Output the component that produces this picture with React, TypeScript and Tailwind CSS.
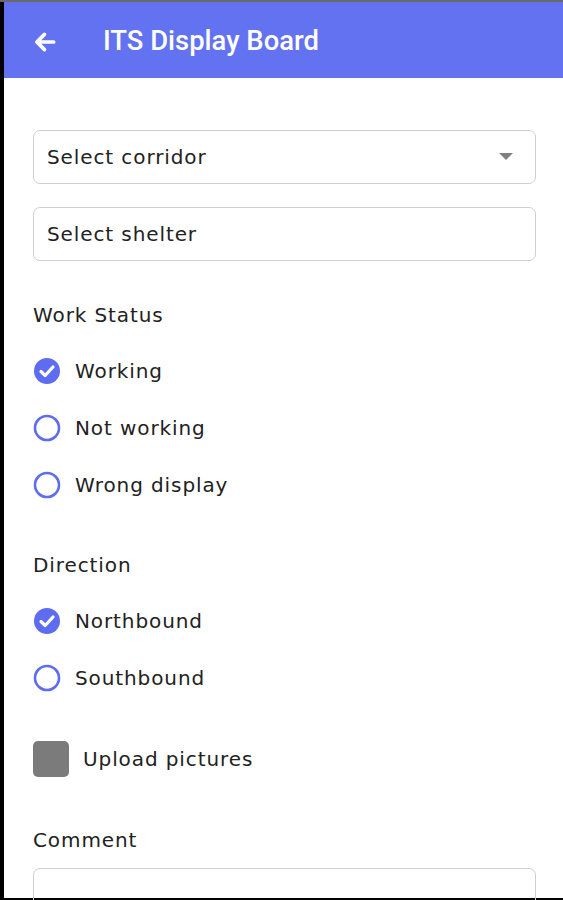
import React from "react";

const font = { fontFamily: '"DejaVu Sans", "Noto Sans", sans-serif' };

function Radio({ checked, label }: { checked: boolean; label: string }) {
  return (
    <div className="flex items-center h-[57px]">
      {checked ? (
        <svg width="28" height="28" viewBox="0 0 28 28" className="shrink-0">
          <circle cx="14" cy="14" r="13" fill="#5d6cf0" />
          <path d="M8 14.5 L12.2 18.5 L20 10" stroke="#fff" strokeWidth="3.2" fill="none" strokeLinecap="round" strokeLinejoin="round" />
        </svg>
      ) : (
        <svg width="28" height="28" viewBox="0 0 28 28" className="shrink-0">
          <circle cx="14" cy="14" r="12" fill="none" stroke="#5d6cf0" strokeWidth="2.6" />
        </svg>
      )}
      <span className="ml-[14px] text-[20px] text-[#222] tracking-[0.9px]">{label}</span>
    </div>
  );
}

export default function App() {
  return (
    <div className="w-[563px] h-[900px] overflow-hidden bg-black pl-[4px] pb-[2px]" style={font}>
      <div className="h-[2px] bg-[#6a6a6a] -ml-[4px]" />
      <div className="h-[896px] bg-white flex flex-col">
        <div className="h-[76px] bg-[#6372f1] flex items-center pl-[28px] shrink-0">
          <svg width="26" height="26" viewBox="0 0 24 24" className="shrink-0 mt-[4px]">
            <path d="M20 12 H5 M11.5 5 L4.5 12 L11.5 19" stroke="#fff" strokeWidth="3.4" fill="none" strokeLinecap="round" strokeLinejoin="round" />
          </svg>
          <span className="ml-[45px] mt-[4px] text-white text-[27.4px] font-medium" style={{ fontFamily: 'Roboto, sans-serif' }}>
            ITS Display Board
          </span>
        </div>
        <div className="pl-[29px] pr-[27px] pt-[52px] flex flex-col">
          <div className="h-[54px] border border-[#cfcfcf] rounded-[7px] flex items-center justify-between pl-[13px] pr-[22px]">
            <span className="text-[20px] text-[#222] tracking-[0.9px]">Select corridor</span>
            <svg width="14" height="8" viewBox="0 0 14 8">
              <path d="M0 0 H14 L7 7 Z" fill="#808080" />
            </svg>
          </div>
          <div className="mt-[23px] h-[54px] border border-[#cfcfcf] rounded-[7px] flex items-center pl-[13px]">
            <span className="text-[20px] text-[#222] tracking-[0.9px]">Select shelter</span>
          </div>
          <div className="mt-[41px] text-[20px] text-[#222] leading-[26px] tracking-[0.9px]">Work Status</div>
          <div className="mt-[14px] flex flex-col">
            <Radio checked label="Working" />
            <Radio checked={false} label="Not working" />
            <Radio checked={false} label="Wrong display" />
          </div>
          <div className="mt-[39px] text-[20px] text-[#222] leading-[26px] tracking-[0.9px]">Direction</div>
          <div className="mt-[14px] flex flex-col">
            <Radio checked label="Northbound" />
            <Radio checked={false} label="Southbound" />
          </div>
          <div className="mt-[35px] flex items-center">
            <div className="w-[36px] h-[36px] rounded-[5px] bg-[#7b7b7b]" />
            <span className="ml-[14px] text-[20px] text-[#222] tracking-[0.9px]">Upload pictures</span>
          </div>
          <div className="mt-[50px] text-[20px] text-[#222] leading-[26px] tracking-[0.9px]">Comment</div>
          <div className="mt-[15px] h-[80px] border border-[#cfcfcf] rounded-[7px]" />
        </div>
      </div>
    </div>
  );
}
